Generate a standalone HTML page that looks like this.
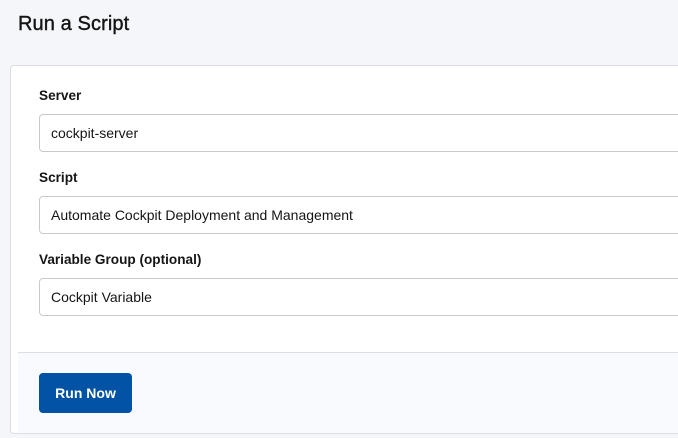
<!DOCTYPE html>
<html><head><style>
body{margin:0;width:678px;height:438px;background:#f5f6fa;font-family:"Liberation Sans",sans-serif;overflow:hidden;position:relative;color:#151515}
h1{position:absolute;left:18px;top:12px;margin:0;font-size:20px;font-weight:normal;line-height:24px;letter-spacing:0.1px;-webkit-text-stroke:0.4px #151515}
.card{position:absolute;left:10px;top:65px;width:690px;height:367px;background:#fff;border:1px solid #dcdde2;border-radius:4px}
.lbl{position:absolute;left:39px;font-size:13.6px;font-weight:bold}
.inp{position:absolute;left:39px;width:660px;border:1px solid #c8c9cd;border-radius:4px;background:#fff;font-size:14px;line-height:36px;padding-left:11px;box-sizing:border-box;height:38px}
.foot{position:absolute;left:18px;top:352px;width:680px;height:80px;background:#f9fafd;border-top:1px solid #dcdde2}
.btn{position:absolute;left:39px;top:373px;width:93px;height:40px;background:#0253a6;border-radius:4px;color:#fff;font-weight:bold;font-size:14px;line-height:40px;text-align:center}
</style></head><body>
<h1>Run a Script</h1>
<div class="card"></div>
<div class="lbl" style="top:88px">Server</div>
<div class="inp" style="top:114px">cockpit-server</div>
<div class="lbl" style="top:170px">Script</div>
<div class="inp" style="top:196px">Automate Cockpit Deployment and Management</div>
<div class="lbl" style="top:252px">Variable Group (optional)</div>
<div class="inp" style="top:278px">Cockpit Variable</div>
<div class="foot"></div>
<div class="btn">Run Now</div>
</body></html>
